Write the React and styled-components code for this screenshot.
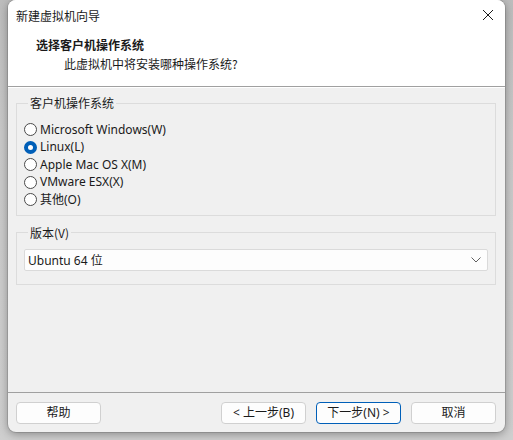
import React, { useState } from 'react';
import styled, { createGlobalStyle } from 'styled-components';

const GlobalStyle = createGlobalStyle`
  html, body {
    margin: 0;
    padding: 0;
    background: linear-gradient(180deg, #bdbdbd 0%, #c9c9c9 30%, #cfcfcf 100%);
    width: 513px;
    height: 440px;
    overflow: hidden;
  }
  body {
    font-family: "Noto Sans", "Noto Sans CJK SC", sans-serif;
    font-size: 12px;
    color: #1a1a1a;
  }
`;

const Page = styled.div`
  padding: 0 8px 0 8px;
  height: 440px;
  box-sizing: border-box;
`;

const Window = styled.div`
  width: 497px;
  height: 432px;
  background: #f0f0f0;
  border-radius: 8px;
  overflow: hidden;
  box-shadow: 0 2px 10px rgba(0, 0, 0, 0.35), 0 0 0 1px rgba(0, 0, 0, 0.12);
  display: flex;
  flex-direction: column;
`;

const TitleBar = styled.div`
  height: 30px;
  background: #ffffff;
  display: flex;
  align-items: center;
  justify-content: space-between;
  padding: 0 8px 0 8px;
`;

const Title = styled.span`
  font-size: 12px;
  font-family: "Noto Sans CJK SC", sans-serif;
`;

const CloseButton = styled.button`
  border: none;
  background: transparent;
  width: 30px;
  height: 30px;
  display: flex;
  align-items: center;
  justify-content: center;
  padding: 0;
  margin-right: -6px;
`;

const Header = styled.div`
  background: #ffffff;
  height: 57px;
  border-bottom: 1px solid #a0a0a0;
  padding: 6px 0 0 28px;
  box-sizing: border-box;
`;

const Heading = styled.div`
  font-family: "Noto Sans CJK SC", sans-serif;
  font-weight: 700;
  font-size: 12px;
  line-height: 18px;
`;

const SubHeading = styled.div`
  font-family: "Noto Sans CJK SC", sans-serif;
  font-size: 12px;
  line-height: 18px;
  padding-left: 28px;
  margin-top: 1px;
`;

const Body = styled.div`
  flex: 1;
  padding: 7px 9px 0 8px;
  border-top: 1px solid #ffffff;
`;

const Group = styled.fieldset`
  margin: ${p => p.$top}px 0 0 0;
  border: 1px solid #dcdcdc;
  border-radius: 0;
  padding: ${p => p.$pad};
`;

const Legend = styled.legend`
  padding: 0 2px;
  margin-left: 4px;
  line-height: 16px;
  font-family: "Noto Sans CJK SC", sans-serif;
`;

const RadioList = styled.div`
  display: flex;
  flex-direction: column;
`;

const RadioRow = styled.label`
  display: flex;
  align-items: center;
  gap: 3px;
  height: 17.5px;
  cursor: default;
`;

const RadioDot = styled.span`
  width: 13px;
  height: 13px;
  box-sizing: border-box;
  border-radius: 50%;
  border: ${p => (p.$checked ? '4px solid #005fb8' : '1px solid #4a4a4a')};
  background: #ffffff;
  flex-shrink: 0;
`;

const RadioText = styled.span`
  line-height: 16px;
`;

const Select = styled.div`
  height: 22px;
  box-sizing: border-box;
  background: #fdfdfd;
  border: 1px solid #dadada;
  border-radius: 2px;
  display: flex;
  align-items: center;
  justify-content: space-between;
  padding: 0 6px 0 3px;
`;

const Footer = styled.div`
  height: 40px;
  border-top: 1px solid #a0a0a0;
  display: flex;
  align-items: flex-start;
  padding: 9px 9px 0 8px;
  box-sizing: border-box;
  gap: 10px;
`;

const Spacer = styled.div`
  flex: 1;
`;

const Button = styled.button`
  width: 85px;
  height: 22px;
  box-sizing: border-box;
  border-radius: 4px;
  background: #fdfdfd;
  border: 1px solid ${p => (p.$primary ? '#005fb8' : '#d0d0d0')};
  font-family: "Noto Sans", "Noto Sans CJK SC", sans-serif;
  font-size: 12px;
  color: #1a1a1a;
  padding: 0;
  line-height: 18px;
`;

const systems = [
  'Microsoft Windows(W)',
  'Linux(L)',
  'Apple Mac OS X(M)',
  'VMware ESX(X)',
  '其他(O)',
];

export default function App() {
  const [selected, setSelected] = useState(1);

  return (
    <>
      <GlobalStyle />
      <Page>
        <Window>
          <TitleBar>
            <Title>新建虚拟机向导</Title>
            <CloseButton aria-label="关闭">
              <svg width="12" height="12" viewBox="0 0 12 12">
                <path d="M1 1 L11 11 M11 1 L1 11" stroke="#1a1a1a" strokeWidth="1" />
              </svg>
            </CloseButton>
          </TitleBar>
          <Header>
            <Heading>选择客户机操作系统</Heading>
            <SubHeading>此虚拟机中将安装哪种操作系统?</SubHeading>
          </Header>
          <Body>
            <Group $top={0} $pad="10px 8px 6px 7px">
              <Legend>客户机操作系统</Legend>
              <RadioList>
                {systems.map((name, i) => (
                  <RadioRow key={name} onClick={() => setSelected(i)}>
                    <RadioDot $checked={selected === i} />
                    <RadioText>{name}</RadioText>
                  </RadioRow>
                ))}
              </RadioList>
            </Group>
            <Group $top={9} $pad="8px 7px 13px 7px">
              <Legend>版本(V)</Legend>
              <Select>
                <span>Ubuntu 64 位</span>
                <svg width="10" height="6" viewBox="0 0 10 6">
                  <path d="M0.5 0.5 L5 5 L9.5 0.5" fill="none" stroke="#606060" strokeWidth="1" />
                </svg>
              </Select>
            </Group>
          </Body>
          <Footer>
            <Button>帮助</Button>
            <Spacer />
            <Button>&lt; 上一步(B)</Button>
            <Button $primary>下一步(N) &gt;</Button>
            <Button>取消</Button>
          </Footer>
        </Window>
      </Page>
    </>
  );
}
